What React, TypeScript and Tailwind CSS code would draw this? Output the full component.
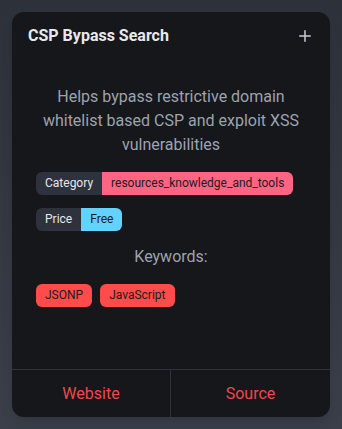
import { Plus } from "lucide-react";

const keywords = ["JSONP", "JavaScript"];

function Badge({ label, value, color }: { label: string; value: string; color: string }) {
  return (
    <div className="flex">
      <div className="flex overflow-hidden rounded-md text-xs leading-[15px]">
        <span className="bg-[#2e323c] px-[9px] py-1 text-[#e5e7eb]">{label}</span>
        <span className={`${color} px-[9px] py-1 text-[#1c1c1e]`}>{value}</span>
      </div>
    </div>
  );
}

export default function App() {
  return (
    <div
      className="flex h-screen w-full bg-gradient-to-b from-[#2d3139] to-[#3b3f49] p-3"
      style={{ fontFamily: "Roboto, 'Liberation Sans', sans-serif" }}
    >
      <div className="flex h-full w-full flex-col overflow-hidden rounded-xl bg-[#16171b] shadow-lg">
        <div className="flex items-center justify-between px-4 py-3">
          <h2 className="text-base font-bold leading-6 text-[#e8e9ec]">CSP Bypass Search</h2>
          <Plus className="h-[18px] w-[18px] text-[#c9ccd3]" strokeWidth={2} />
        </div>

        <div className="flex flex-1 flex-col px-6 pt-[25px]">
          <p className="text-center text-base leading-6 text-[#9ca3af]">
            Helps bypass restrictive domain whitelist based CSP and exploit XSS vulnerabilities
          </p>
          <div className="mt-[15px]">
            <Badge label="Category" value="resources_knowledge_and_tools" color="bg-[#ff6482]" />
          </div>
          <div className="mt-[13px]">
            <Badge label="Price" value="Free" color="bg-[#64d2ff]" />
          </div>
          <p className="mt-[14px] text-center text-base leading-6 text-[#9ca3af]">Keywords:</p>
          <div className="mt-[15px] flex flex-wrap gap-2">
            {keywords.map((k) => (
              <span
                key={k}
                className="rounded-md bg-[#ff4b4b] px-[9px] py-1 text-xs leading-[15px] text-[#1c1c1e]"
              >
                {k}
              </span>
            ))}
          </div>
        </div>

        <div className="grid h-12 grid-cols-2 border-t border-[#2e323c]">
          <button className="flex items-center justify-center border-r border-[#2e323c] text-base text-[#f04848]">
            Website
          </button>
          <button className="flex items-center justify-center text-base text-[#f04848]">
            Source
          </button>
        </div>
      </div>
    </div>
  );
}
